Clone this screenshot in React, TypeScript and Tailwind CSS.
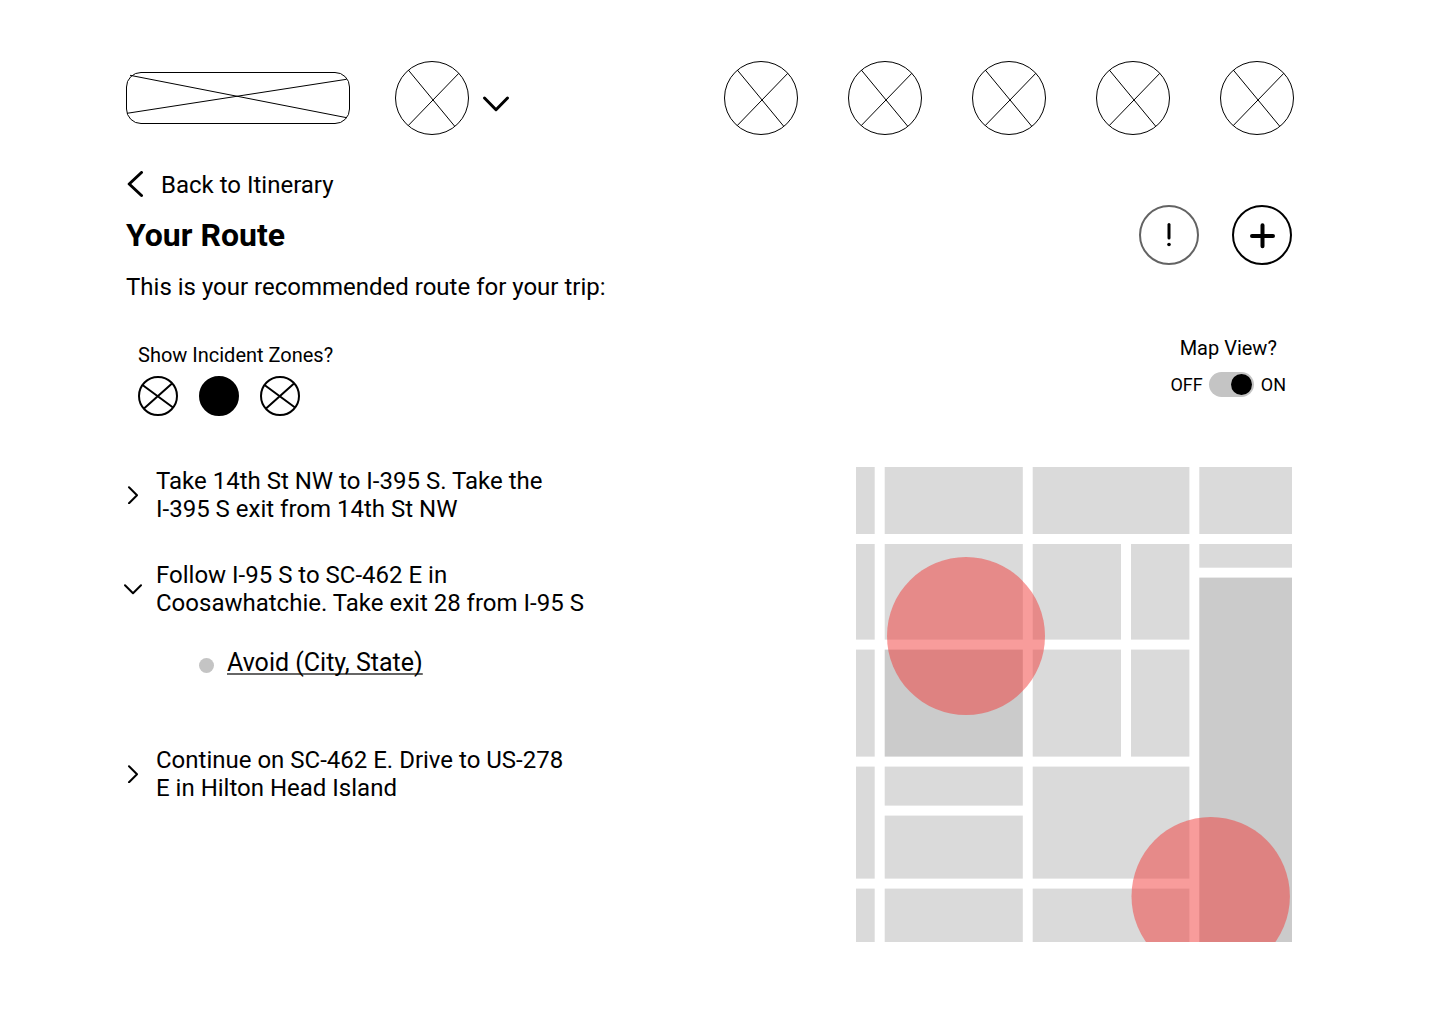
import { useState } from "react";

function CrossedCircle() {
  return (
    <svg viewBox="0 0 74 74" className="block size-[74px]" fill="none" stroke="#000" aria-hidden="true">
      <circle cx="37" cy="37" r="36.5" />
      <path d="M13.3 9 59.5 65M63.8 12.3 13.3 64.5" />
    </svg>
  );
}

function CrossedBanner() {
  return (
    <svg viewBox="0 0 224 52" className="block h-[52px] w-[224px]" fill="none" stroke="#000" aria-hidden="true">
      <rect x="0.5" y="0.5" width="223" height="51" rx="14.5" />
      <path d="M4 3.3 220.7 45.7M220.5 7.3 1 41.3" />
    </svg>
  );
}

const mapBlocks: [number, number, number, number][] = [
  [0, 0, 18.7, 67],
  [28.7, 0, 138.1, 67],
  [176.7, 0, 156.7, 67],
  [343.3, 0, 92.7, 67],
  [0, 77, 18.7, 95.6],
  [28.7, 77, 138.1, 95.6],
  [176.7, 77, 88.3, 95.6],
  [275, 77, 58.4, 95.6],
  [343.3, 77, 92.7, 23.7],
  [0, 182.6, 18.7, 107],
  [176.7, 182.6, 88.3, 107],
  [275, 182.6, 58.4, 107],
  [0, 299.6, 18.7, 112],
  [28.7, 299.6, 138.1, 39],
  [176.7, 299.6, 156.7, 112],
  [28.7, 348.6, 138.1, 63],
  [0, 421.6, 18.7, 53.4],
  [28.7, 421.6, 138.1, 53.4],
  [176.7, 421.6, 156.7, 53.4],
];

function RouteMap() {
  return (
    <svg viewBox="0 0 436 475" className="block w-full overflow-hidden" role="img" aria-label="Route map">
      <g fill="#dadada">
        {mapBlocks.map(([x, y, width, height]) => (
          <rect key={`${x}-${y}`} x={x} y={y} width={width} height={height} />
        ))}
      </g>
      <g fill="#cbcbcb">
        <rect x="28.7" y="182.6" width="138.1" height="107" />
        <rect x="343.3" y="110.6" width="92.7" height="364.4" />
      </g>
      <g fill="#f23a38" fillOpacity="0.5">
        <circle cx="110" cy="169" r="79" />
        <circle cx="354.7" cy="429.2" r="79.2" />
      </g>
    </svg>
  );
}

function StepChevron({ open }: { open: boolean }) {
  return (
    <svg
      viewBox="0 0 18 18"
      className="size-[18px] shrink-0"
      fill="none"
      stroke="#000"
      strokeWidth="2"
      strokeLinecap="round"
      strokeLinejoin="round"
      aria-hidden="true"
    >
      {open ? <path d="M1 5.2 9 13.2 17 5.2" /> : <path d="M5 1.2 13 9.2 5 17.2" />}
    </svg>
  );
}

const steps = [
  { lines: ["Take 14th St NW to I-395 S. Take the", "I-395 S exit from 14th St NW"] },
  {
    lines: ["Follow I-95 S to SC-462 E in", "Coosawhatchie. Take exit 28 from I-95 S"],
    warning: "Avoid (City, State)",
  },
  { lines: ["Continue on SC-462 E. Drive to US-278", "E in Hilton Head Island"] },
];

const zones = ["Low", "Medium", "High"];
const places = ["Home", "Search", "Trips", "Alerts", "Profile"];

export default function App() {
  const [zone, setZone] = useState("Medium");
  const [mapOn, setMapOn] = useState(true);
  const [openStep, setOpenStep] = useState(1);

  return (
    <div className="min-h-screen bg-white pt-[61px] pr-[146px] pb-20 pl-[126px] font-[Roboto,sans-serif] text-2xl leading-7 text-black">
      <header className="flex items-center justify-between">
        <div className="flex items-center">
          <a href="#home" aria-label="Logo">
            <CrossedBanner />
          </a>
          <button type="button" aria-label="Account menu" className="ml-[45px] flex items-center gap-3">
            <CrossedCircle />
            <svg
              viewBox="0 0 30 20"
              className="mt-3 h-5 w-[30px]"
              fill="none"
              stroke="#000"
              strokeWidth="3"
              strokeLinecap="round"
              strokeLinejoin="round"
              aria-hidden="true"
            >
              <path d="M3.5 4 15 15.7 26.5 4" />
            </svg>
          </button>
        </div>
        <nav className="flex gap-[50px]">
          {places.map((place) => (
            <a key={place} href={`#${place.toLowerCase()}`} aria-label={place}>
              <CrossedCircle />
            </a>
          ))}
        </nav>
      </header>

      <main className="mt-9 flex items-start justify-between gap-10 pr-0.5">
        <section className="flex flex-col items-start">
          <a href="#itinerary" className="flex items-center gap-4">
            <svg
              viewBox="0 0 19 28"
              className="h-7 w-[19px]"
              fill="none"
              stroke="#000"
              strokeWidth="3"
              strokeLinecap="round"
              strokeLinejoin="round"
              aria-hidden="true"
            >
              <path d="M15.5 1.5 3.2 13 15.5 24.5" />
            </svg>
            Back to Itinerary
          </a>
          <h1 className="mt-4 text-[32px] leading-10 font-bold">Your Route</h1>
          <p className="mt-[18px]">This is your recommended route for your trip:</p>

          <fieldset className="mt-[42px] ml-3">
            <legend className="text-xl leading-6">Show Incident Zones?</legend>
            <div className="mt-[9px] flex gap-[21px]">
              {zones.map((name) => (
                <label key={name} className="cursor-pointer rounded-full has-focus-visible:outline-2">
                  <input
                    type="radio"
                    name="zone"
                    aria-label={name}
                    checked={zone === name}
                    onChange={() => setZone(name)}
                    className="sr-only"
                  />
                  <svg viewBox="0 0 40 40" className="block size-10" fill="none" stroke="#000" strokeWidth="2" aria-hidden="true">
                    {zone === name ? (
                      <circle cx="20" cy="20" r="19" fill="#000" />
                    ) : (
                      <>
                        <circle cx="20" cy="20" r="19" />
                        <path d="M4.5 9 35 31.5M34 7.5 6 32.5" />
                      </>
                    )}
                  </svg>
                </label>
              ))}
            </div>
          </fieldset>

          <ol className="mt-[51px] -ml-0.5">
            {steps.map((step, index) => {
              const open = openStep === index;
              return (
                <li key={step.lines[0]} className="mb-[38px]">
                  <button
                    type="button"
                    aria-expanded={open}
                    onClick={() => setOpenStep(open ? -1 : index)}
                    className="flex items-center gap-3.5 text-left"
                  >
                    <StepChevron open={open} />
                    <span>
                      {step.lines.map((line) => (
                        <span key={line} className="block">
                          {line}
                        </span>
                      ))}
                    </span>
                  </button>
                  {open && step.warning && (
                    <div className="mt-8 mb-[69px] ml-[75px] flex items-center gap-[13px]">
                      <span className="mt-1 size-[15px] rounded-full bg-[#c4c4c4]" />
                      <a
                        href="#avoid"
                        className="text-[25px] underline decoration-[#666] decoration-2 underline-offset-2 [text-decoration-skip-ink:none]"
                      >
                        {step.warning}
                      </a>
                    </div>
                  )}
                </li>
              );
            })}
          </ol>
        </section>

        <aside className="flex w-[436px] flex-col items-end pt-[34px]">
          <div className="flex gap-[33px]">
            <button
              type="button"
              aria-label="Report an incident"
              className="flex size-[60px] items-center justify-center rounded-full border-2 border-[#636363]"
            >
              <svg viewBox="0 0 30 30" className="size-[30px]" fill="none" stroke="#000" strokeLinecap="round" aria-hidden="true">
                <path d="M15 4.5V18" strokeWidth="3" />
                <circle cx="15" cy="24.5" r="1.8" fill="#000" stroke="none" />
              </svg>
            </button>
            <button
              type="button"
              aria-label="Add a stop"
              className="flex size-[60px] items-center justify-center rounded-full border-2 border-black"
            >
              <svg viewBox="0 0 30 30" className="size-[30px]" fill="none" stroke="#000" strokeWidth="4" strokeLinecap="round" aria-hidden="true">
                <path d="M15.5 5.2V26.2M5 16H26" />
              </svg>
            </button>
          </div>

          <div className="mt-[71px] mr-1.5 flex flex-col items-center">
            <label htmlFor="map-view" className="text-xl leading-6">
              Map View?
            </label>
            <div className="mt-3 flex items-center gap-1.5 text-lg leading-6">
              <span>OFF</span>
              <label className="mr-px flex h-[25px] w-[45px] cursor-pointer items-center rounded-full bg-[#c4c4c4] px-0.5 has-checked:justify-end has-focus-visible:outline-2">
                <input
                  id="map-view"
                  type="checkbox"
                  role="switch"
                  checked={mapOn}
                  onChange={() => setMapOn(!mapOn)}
                  className="sr-only"
                />
                <span className="size-[21px] rounded-full bg-black" />
              </label>
              <span>ON</span>
            </div>
          </div>

          {mapOn && (
            <div className="mt-[70px] w-full">
              <RouteMap />
            </div>
          )}
        </aside>
      </main>
    </div>
  );
}
